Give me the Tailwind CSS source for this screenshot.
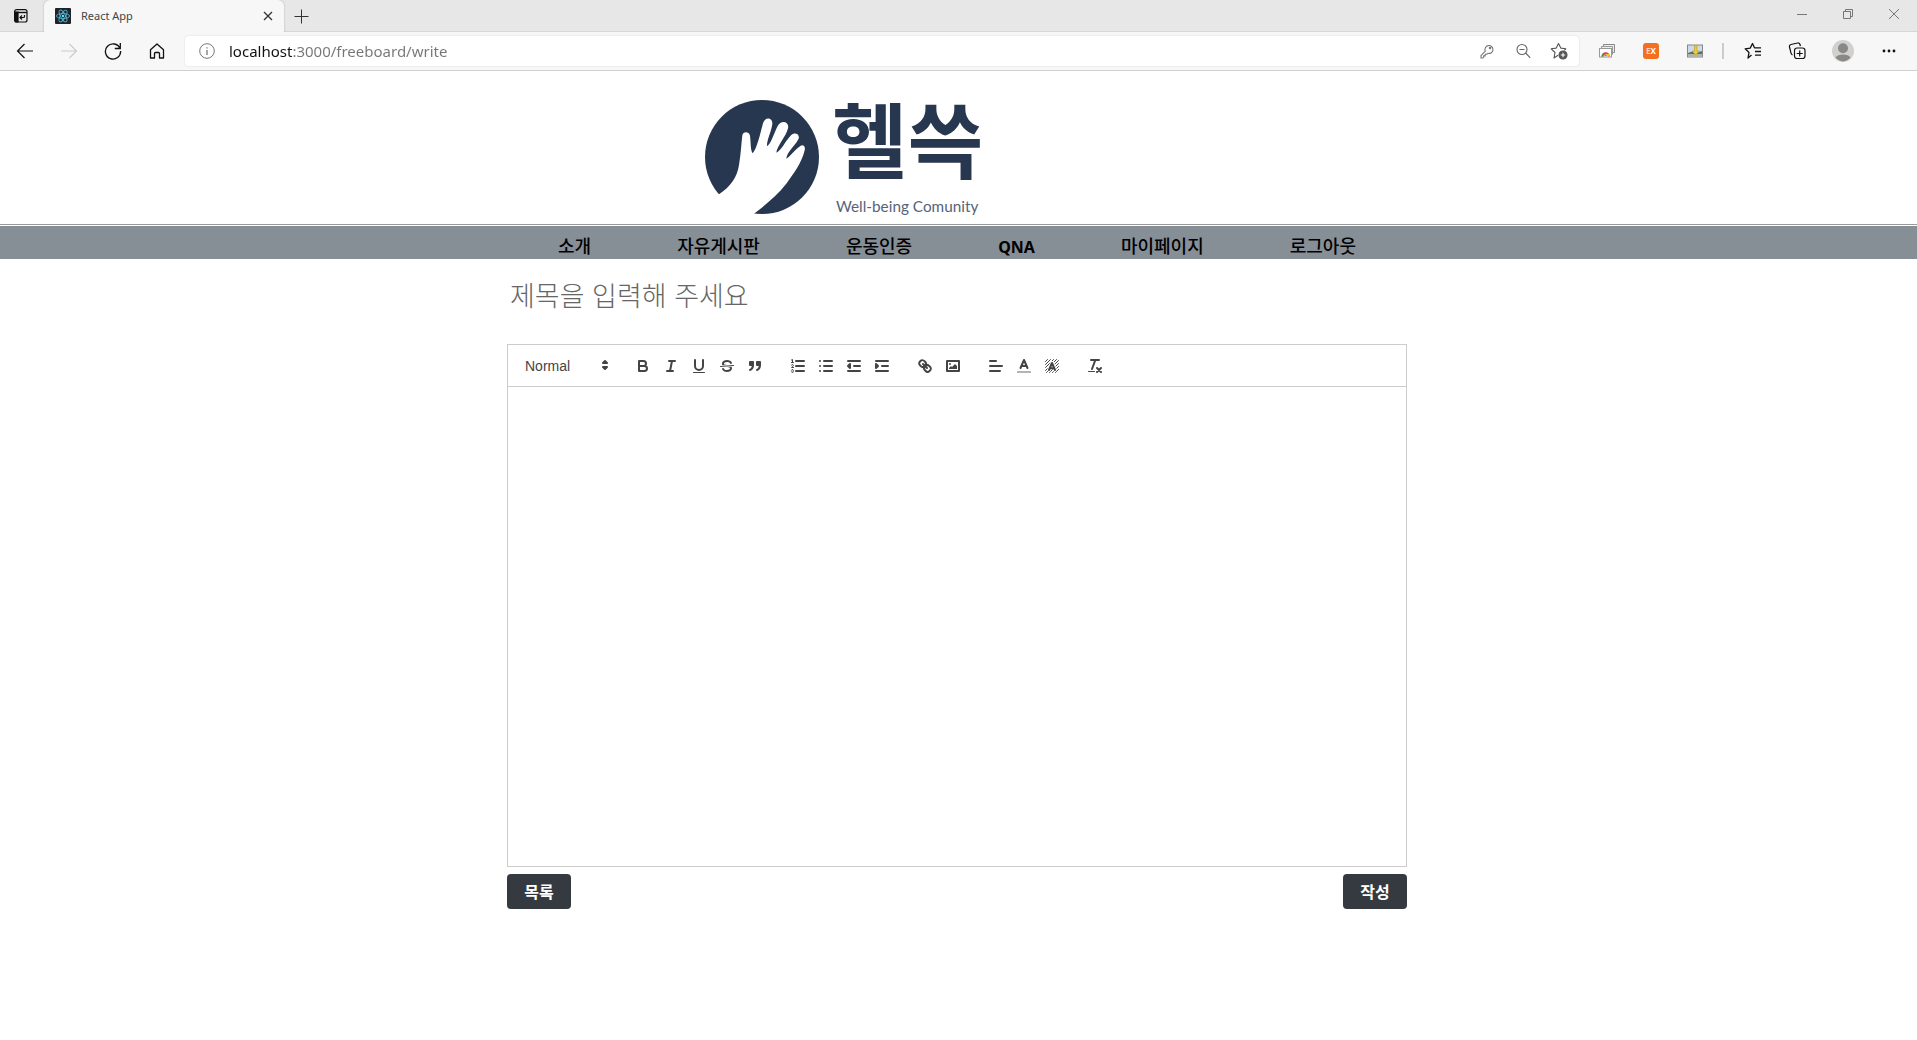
<!DOCTYPE html>
<html lang="ko">
<head>
<meta charset="utf-8">
<meta name="viewport" content="width=device-width, initial-scale=1">
<title>React App</title>
<script src="https://cdn.jsdelivr.net/npm/@tailwindcss/browser@4"></script>
</head>
<body class="min-h-screen bg-white font-['Noto_Sans','Noto_Sans_CJK_KR',sans-serif] text-black">

<!-- Browser tab strip -->
<div class="flex h-8 items-stretch border-b border-[#d6d6d6] bg-[#e7e7e7]">
  <button aria-label="Tab actions" class="flex w-11 items-center pl-[13px]">
    <svg class="size-4" viewBox="0 0 16 16" fill="none" stroke="#111" stroke-width="1.2"><rect x="1.6" y="1.6" width="12.4" height="12.4" rx="2"/><path d="M1.6 4.5H14" stroke-width="1.4"/><path d="M2 4h3v10H3a1 1 0 0 1-1-1z" fill="#111"/><path d="M11.5 7v1.5a1 1 0 0 1-1 1H7.2M9 7.5l-2 2 2 2"/></svg>
  </button>
  <div class="-mb-px flex w-60 items-center rounded-t-md bg-[#f7f7f7] pl-[11px] pr-2 shadow-[0_0_2px_#0004] [clip-path:inset(0_-3px_0_-3px)]">
    <svg class="size-4" viewBox="0 0 16 16"><rect width="16" height="16" rx="1" fill="#20232a"/><g fill="none" stroke="#4fb3cd" stroke-width=".9"><ellipse cx="8" cy="8" rx="6.6" ry="2.5"/><ellipse cx="8" cy="8" rx="6.6" ry="2.5" transform="rotate(60 8 8)"/><ellipse cx="8" cy="8" rx="6.6" ry="2.5" transform="rotate(120 8 8)"/></g><circle cx="8" cy="8" r="1.3" fill="#61dafb"/></svg>
    <span class="ml-2.5 flex-1 text-[11px] text-[#444]">React App</span>
    <button aria-label="Close tab" class="flex size-4 items-center justify-center"><svg class="size-2.5" viewBox="0 0 10 10" stroke="#333" stroke-width="1.3"><path d="M1 1l8 8M9 1L1 9"/></svg></button>
  </div>
  <button aria-label="New tab" class="flex w-[34px] items-center justify-center"><svg class="size-4" viewBox="0 0 16 16" stroke="#333" stroke-width="1"><path d="M8.500 1.500v14M1.500 8.500h14"/></svg></button>
  <div class="ml-auto flex items-center pb-1">
    <button aria-label="Minimize" class="flex w-[46px] justify-center"><svg class="size-3" viewBox="0 0 12 12" stroke="#777"><path d="M1 6.500h10"/></svg></button>
    <button aria-label="Restore" class="flex w-[46px] justify-center"><svg class="size-3" viewBox="0 0 12 12" stroke="#777" fill="none"><path d="M1.500 3.500h7v7h-7zM3.500 3.500v-2h7v7h-2"/></svg></button>
    <button aria-label="Close window" class="flex w-[46px] justify-center"><svg class="size-3" viewBox="0 0 12 12" stroke="#777"><path d="M1 1l10 10M11 1L1 11"/></svg></button>
  </div>
</div>

<!-- Browser toolbar -->
<div class="flex h-[39px] items-center border-b border-[#d0d0d0] bg-[#f7f7f7] pl-[3px] pr-1.5">
  <button aria-label="Back" class="flex w-11 justify-center"><svg class="size-[18px]" viewBox="0 0 18 18" fill="none" stroke="#111" stroke-width="1.2"><path d="M17 9H1.500M8.500 2l-7 7 7 7"/></svg></button>
  <button aria-label="Forward" disabled class="flex w-11 justify-center"><svg class="size-[18px]" viewBox="0 0 18 18" fill="none" stroke="#ccc" stroke-width="1.200"><path d="M1 9h15.500M9.500 2l7 7-7 7"/></svg></button>
  <button aria-label="Reload" class="flex w-11 justify-center"><svg class="size-[18px]" viewBox="0 0 18 18" fill="none" stroke="#111" stroke-width="1.300"><path d="M16 6.500A7.600 7.600 0 1 0 16.600 9M16.300 1v5.500h-5.500"/></svg></button>
  <button aria-label="Home" class="flex w-11 justify-center"><svg class="size-[18px]" viewBox="0 0 18 18" fill="none" stroke="#111" stroke-width="1.300" stroke-linejoin="round"><path d="M2.500 7.800L9 2l6.500 5.800V16h-4v-4.500a1 1 0 0 0-1-1h-3a1 1 0 0 0-1 1V16h-4z"/></svg></button>
  <div class="ml-1.5 flex h-[30px] flex-1 items-center rounded bg-white pl-3.5 pr-0.5 shadow-[0_0_2px_#0002]">
    <button aria-label="Site information" class="mr-3.5 flex"><svg class="size-4" viewBox="0 0 16 16" fill="none" stroke="#777"><circle cx="8" cy="8" r="7.300"/><path d="M8 7v5M8 4.200v1.400" stroke-width="1.300"/></svg></button>
    <input aria-label="Address" value="localhost:3000/freeboard/write" class="min-w-0 flex-1 bg-[linear-gradient(90deg,#111_64px,#767676_64px)] bg-clip-text text-[15px] text-transparent outline-none">
    <button aria-label="Saved passwords" class="flex w-9 justify-center"><svg class="size-4" viewBox="0 0 16 16" fill="none" stroke="#777" stroke-width="1.100" stroke-linejoin="round"><path d="M6.300 8.200a4 4 0 1 1 2.600 2.200L7.700 11.300H6.200v1.600H4.600v1.500L3.600 15H2v-2.400z"/><circle cx="11" cy="5" r=".7"/></svg></button>
    <button aria-label="Zoom out" class="flex w-9 justify-center"><svg class="size-4" viewBox="0 0 16 16" fill="none" stroke="#666" stroke-width="1.100"><circle cx="7" cy="6.500" r="5"/><path d="M10.700 10l4.500 4.800M4.500 6.500h5"/></svg></button>
    <button aria-label="Add to favorites" class="flex w-9 justify-center"><svg class="size-[18px]" viewBox="0 0 18 18" fill="none" stroke="#555" stroke-width="1.100" stroke-linejoin="round"><path d="M8 13.200L4 16l1-5.500L1.200 6.800l5-.7L8.500 1.500l2.300 4.600 5 .7-1.500 1.500"/><circle cx="13" cy="13" r="4" fill="#555"/><path d="M13 10.800v4.400M10.800 13h4.400" stroke="#fff"/></svg></button>
  </div>
  <div class="ml-1.5 flex items-center">
    <button aria-label="Image extension" class="flex w-11 justify-center"><svg class="size-4" viewBox="0 0 16 16"><path d="M4.500 1.500h11v8h-11z" fill="#eee" stroke="#888"/><path d="M2.500 3.500h11v8h-11z" fill="#eee" stroke="#999"/><rect x=".5" y="5.500" width="12" height="8.500" fill="#fff" stroke="#999"/><path d="M2.500 13.500a4.200 4.200 0 0 1 8.400 0z" fill="#dc4437"/><path d="M2.500 13.500a4.200 4.200 0 0 1 1-2.700l2 2.700z" fill="#35a852"/><path d="M10.900 13.500a4.200 4.200 0 0 0-.9-2.500H7l1.500 2.500z" fill="#f8c025"/><path d="M4.900 13.500a1.800 1.800 0 0 1 3.600 0z" fill="#4285f4" stroke="#fff" stroke-width=".5"/></svg></button>
    <button aria-label="EX extension" class="flex w-11 justify-center"><span class="flex size-4 items-center justify-center rounded-[3px] bg-[#f37021] font-['Open_Sans',sans-serif] text-[8px] font-bold text-white"><span class="text-white/70">E</span>X</span></button>
    <button aria-label="Download extension" class="flex w-11 justify-center"><svg class="size-4" viewBox="0 0 16 16"><rect x=".5" y="2" width="15" height="12" fill="#c9dcea" stroke="#888"/><path d="M1 10l4-1.500 5 1 5-1.500v3H1z" fill="#51718a"/><path d="M1 11h14v2.500H1z" fill="#b5b59a"/><path d="M7.500 3h2.500v5h2.500L8.700 12 5 8h2.500z" fill="#f5cb35" stroke="#b78d15" stroke-width=".5"/></svg></button>
    <span class="ml-[5px] mr-[7px] h-4 w-0.5 bg-[#ccc]"></span>
    <button aria-label="Favorites" class="flex w-11 justify-center"><svg class="size-[18px]" viewBox="0 0 18 18" fill="none" stroke="#111" stroke-width="1.300" stroke-linejoin="round"><path d="M7.500 13L4 16l1-5.500L1.200 6.800l5-.7L8.500 1.500l2 4.300H17M11 9.500h6M11 13.200h6"/></svg></button>
    <button aria-label="Collections" class="flex w-11 justify-center"><svg class="size-[18px]" viewBox="0 0 18 18" fill="none" stroke="#111" stroke-width="1.200"><path d="M4.500 12.800A2 2 0 0 1 3 11.200L1.500 5A2 2 0 0 1 3 2.500L9.500 1A2 2 0 0 1 12 2.500l.4 1.700"/><rect x="6.500" y="6" width="10.500" height="10.500" rx="2.500"/><path d="M11.700 8.500v6M8.700 11.500h6"/></svg></button>
    <button aria-label="Profile" class="flex w-12 justify-center"><svg class="size-[22px]" viewBox="0 0 22 22"><circle cx="11" cy="11" r="11" fill="#d2d0ce"/><circle cx="11" cy="8.300" r="5" fill="#8a8886"/><path d="M3.500 17.500c2-4 13-4 15 0A10.500 10.500 0 0 1 11 21.500a10.500 10.500 0 0 1-7.500-4z" fill="#8a8886"/></svg></button>
    <button aria-label="Settings and more" class="flex w-11 justify-center"><svg class="size-4" viewBox="0 0 16 16" fill="#111"><circle cx="3" cy="8" r="1.400"/><circle cx="8" cy="8" r="1.400"/><circle cx="13" cy="8" r="1.400"/></svg></button>
  </div>
</div>

<!-- Site header -->
<header class="[&>*]:pr-[3px]">
  <div>
    <div class="mx-auto h-[153px] max-w-[900px] pl-[182px]">
      <a href="#" aria-label="헬쓱" class="inline-block">
        <svg class="h-[152px] w-[310px]" viewBox="0 3 930 456" fill="#27374f">
          <circle cx="219" cy="261" r="171"/>
          <path fill="#fff" d="M90 373C125 350 145 320 150 285C156 250 157 220 160 196C162 184 180 184 183 197C186 220 184 240 191 250C204 236 214 190 222 160C228 138 252 142 250 162C247 185 233 210 234 229C246 222 254 192 266 168C276 148 302 154 297 175C291 200 264 228 262 248C278 242 288 214 306 196C318 183 335 194 328 208C316 230 294 246 292 266C306 258 318 238 334 228C343 222 350 230 347 241C338 280 312 312 293 340C265 376 226 408 195 431L150 455L60 440L40 400Z"/>
          <text x="430" y="306" font-size="246" font-weight="700" font-family="'Noto Sans CJK KR',sans-serif">헬쓱</text>
          <text x="441" y="425" font-size="46" font-family="Lato,sans-serif" fill="#56637a">Well-being Comunity</text>
        </svg>
      </a>
    </div>
  </div>
  <nav class="border-t border-[#999] bg-[linear-gradient(#fff_1px,#868e96_1px)] pt-px">
    <ul class="mx-auto flex h-[33px] max-w-[900px] justify-center gap-[86px] pt-1 text-lg/8 font-medium">
      <li><a href="#">소개</a></li>
      <li><a href="#">자유게시판</a></li>
      <li><a href="#">운동인증</a></li>
      <li><a href="#" class="text-base/8 font-bold">QNA</a></li>
      <li><a href="#">마이페이지</a></li>
      <li><a href="#">로그아웃</a></li>
    </ul>
  </nav>
</header>

<!-- Post editor -->
<main class="pr-[3px]">
  <form class="mx-auto max-w-[900px]">
    <input aria-label="제목" placeholder="제목을 입력해 주세요" class="mt-4 block h-10 w-full px-[3px] font-['Noto_Sans_CJK_KR',sans-serif] text-[27px] font-light outline-none placeholder:text-[#666]">

    <div class="mt-[29px] flex h-[43px] items-center gap-[15px] border border-[#ccc] px-2 [&_button]:h-6 [&_button]:w-7 [&_button]:px-[5px] [&_button]:py-[3px] [&_svg]:size-[18px] [&_svg]:fill-none [&_svg]:stroke-[#444] [&_svg]:stroke-2 [&_svg]:[stroke-linecap:round] [&_svg]:[stroke-linejoin:round]">
      <div class="relative w-[98px]">
        <select aria-label="Text style" class="h-6 w-full appearance-none pl-[9px] font-['Liberation_Sans',sans-serif] text-sm font-medium text-[#444] outline-none"><option>Normal</option><option>Heading 1</option><option>Heading 2</option></select>
        <svg class="pointer-events-none absolute right-0 top-[3px]" viewBox="0 0 18 18"><path fill="#444" d="M7 11l2 2 2-2zM7 7l2-2 2 2z"/></svg>
      </div>
      <div class="flex">
        <button type="button" aria-label="Bold"><svg viewBox="0 0 18 18"><path d="M5 4H9.500A2.500 2.500 0 0 1 9.500 9H5ZM5 9h5.500A2.500 2.500 0 0 1 10.500 14H5Z"/></svg></button>
        <button type="button" aria-label="Italic"><svg viewBox="0 0 18 18"><path d="M7 4h6M5 14h6M8 14L10 4"/></svg></button>
        <button type="button" aria-label="Underline"><svg viewBox="0 0 18 18"><path d="M5 3V9a4 4 0 0 0 8 0V3"/><rect x="3" y="15" width="12" height="1" rx=".5" fill="#444" stroke="none"/></svg></button>
        <button type="button" aria-label="Strike"><svg viewBox="0 0 18 18"><path d="M15.500 8.500L2.500 9.500" stroke-width="1"/><path fill="#444" stroke="none" d="M9.007,8C6.542,7.791,6,7.519,6,6.500,6,5.792,7.283,5,9,5c1.571,0,2.765.679,2.969,1.309a1,1,0,0,0,1.900-.617C13.356,4.106,11.354,3,9,3,6.200,3,4,4.538,4,6.500a3.200,3.200,0,0,0,.5,1.843ZM8.984,10C11.457,10.208,12,10.479,12,11.500c0,0.708-1.283,1.500-3,1.500-1.571,0-2.765-.679-2.969-1.309a1,1,0,1,0-1.900.617C4.644,13.894,6.646,15,9,15c2.800,0,5-1.538,5-3.500a3.200,3.200,0,0,0-.5-1.843Z"/></svg></button>
        <button type="button" aria-label="Quote"><svg viewBox="0 0 18 18"><path fill="#444" d="M4 5h3v3H4zM11 5h3v3h-3zM7 8c0 4-3 5-3 5M14 8c0 4-3 5-3 5"/></svg></button>
      </div>
      <div class="flex">
        <button type="button" aria-label="Ordered list"><svg viewBox="0 0 18 18"><path d="M7 4h8M7 9h8M7 14h8"/><path stroke-width="1" d="M2.500 5.500h2M2.500 3l1-.5v3M4.500 10.500h-2c0-.234 1.850-1.076 1.850-2.234A.959.959 0 0 0 2.500 8.156M2.500 14.846a.959.959 0 0 0 1.850-.109A.7.7 0 0 0 3.750 14a.688.688 0 0 0 .6-.736.959.959 0 0 0-1.850-.109"/></svg></button>
        <button type="button" aria-label="Bullet list"><svg viewBox="0 0 18 18"><path d="M7 4h8M7 9h8M7 14h8M3 4h0M3 9h0M3 14h0"/></svg></button>
        <button type="button" aria-label="Outdent"><svg viewBox="0 0 18 18"><path d="M3 14h12M3 4h12M9 9h6"/><path fill="#444" d="M5 7v4L3 9z"/></svg></button>
        <button type="button" aria-label="Indent"><svg viewBox="0 0 18 18"><path d="M3 14h12M3 4h12M9 9h6"/><path fill="#444" d="M3 7v4l2-2z"/></svg></button>
      </div>
      <div class="flex">
        <button type="button" aria-label="Link"><svg viewBox="0 0 18 18"><path d="M7 7l4 4M8.900,4.577a3.476,3.476,0,0,1,.36,4.679A3.476,3.476,0,0,1,4.577,8.900C3.185,7.500,2.035,6.400,4.217,4.217S7.500,3.185,8.900,4.577ZM13.423,9.100a3.476,3.476,0,0,0-4.679-.36,3.476,3.476,0,0,0,.36,4.679c1.392,1.392,2.500,2.542,4.679.36S14.815,10.500,13.423,9.100Z"/></svg></button>
        <button type="button" aria-label="Image"><svg viewBox="0 0 18 18"><rect x="3" y="4" width="12" height="10"/><g fill="#444" stroke="none"><circle cx="6" cy="7" r="1"/><path d="M5 12v-1l2-2 1 1 3-3 2 2v3z"/></g></svg></button>
      </div>
      <div class="flex">
        <button type="button" aria-label="Align"><svg viewBox="0 0 18 18"><path d="M3 4h6M3 9h12M3 14h10"/></svg></button>
        <button type="button" aria-label="Text color"><svg viewBox="0 0 18 18"><path d="M2 15h14" opacity=".4" stroke-linecap="butt"/><path d="M5.500 11L9 3l3.500 8M6.400 9h5.200"/></svg></button>
        <button type="button" aria-label="Background color"><svg viewBox="0 0 18 18"><path stroke-width="1" d="M2.500 4.500l2-2M2.500 7.500l5-5M2.500 10.500l8-8M2.500 13.500l11-11M3.500 15.500l12-12M6.500 15.500l9-9M9.500 15.500l6-6M12.500 15.500l3-3"/><path stroke="#fff" stroke-width="4" d="M6 13L9 6l3 7"/><path d="M6 13L9 6l3 7M7 11.200h4"/></svg></button>
      </div>
      <div class="flex">
        <button type="button" aria-label="Clear formatting"><svg viewBox="0 0 18 18"><path d="M5 3h8M6 12L9.350 3M11 11l4 4M15 11l-4 4"/><rect x="2" y="14" width="7" height="1" rx=".5" fill="#444" stroke="none"/></svg></button>
      </div>
    </div>
    <textarea aria-label="내용" class="block h-[480px] w-full resize-none border border-t-0 border-[#ccc] px-4 py-3 text-sm outline-none"></textarea>

    <div class="mt-[7px] flex justify-between font-['Noto_Sans_CJK_KR',sans-serif] text-base font-bold text-white">
      <button type="button" class="flex h-[35px] w-16 items-center justify-center rounded bg-[#343a40] pb-0.5">목록</button>
      <button type="submit" class="flex h-[35px] w-16 items-center justify-center rounded bg-[#343a40] pb-0.5">작성</button>
    </div>
  </form>
</main>
</body>
</html>
